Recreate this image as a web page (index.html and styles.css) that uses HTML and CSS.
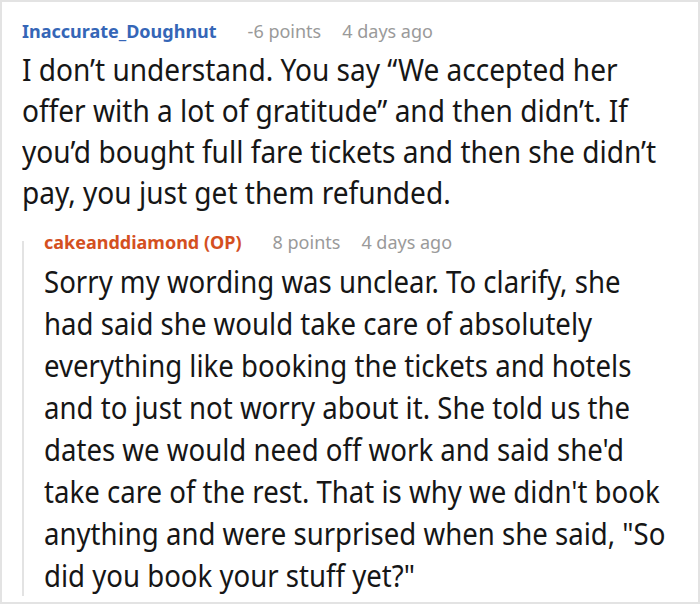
FILE: index.html
```html
<!DOCTYPE html>
<html>
<head>
<meta charset="utf-8">
<link rel="stylesheet" href="styles.css">
</head>
<body>
<div class="frame">
  <div class="comment">
    <div class="meta">
      <span class="user user-blue">Inaccurate_Doughnut</span>
      <span class="info">-6 points</span>
      <span class="info">4 days ago</span>
    </div>
    <p class="body body-top">I don’t understand. You say “We accepted her<br>offer with a lot of gratitude” and then didn’t. If<br>you’d bought full fare tickets and then she didn’t<br>pay, you just get them refunded.</p>
    <div class="reply">
      <div class="meta">
        <span class="user user-orange">cakeanddiamond (OP)</span>
        <span class="info">8 points</span>
        <span class="info">4 days ago</span>
      </div>
      <p class="body body-reply">Sorry my wording was unclear. To clarify, she<br>had said she would take care of absolutely<br>everything like booking the tickets and hotels<br>and to just not worry about it. She told us the<br>dates we would need off work and said she'd<br>take care of the rest. That is why we didn't book<br>anything and were surprised when she said, "So<br>did you book your stuff yet?"</p>
    </div>
  </div>
</div>
</body>
</html>
```

FILE: styles.css
```css
html, body {
  margin: 0;
  padding: 0;
  background: #ffffff;
}
.frame {
  width: 700px;
  height: 604px;
  box-sizing: border-box;
  border: 2px solid #e3e3e3;
  padding: 17px 25px 0 20px;
  font-family: "Noto Sans", "Open Sans", sans-serif;
  color: #161616;
  overflow: hidden;
}
.meta {
  display: flex;
  font-size: 18px;
  line-height: 24px;
  height: 24px;
}
.user {
  font-weight: 700;
  margin-right: 31px;
}
.user-blue { color: #3566b7; }
.user-orange { color: #d4501f; }
.info {
  color: #9a9a9a;
  margin-right: 21px;
}
.body {
  margin: 6px 0 0 0;
  font-size: 31px;
  line-height: 41px;
  white-space: nowrap;
  transform-origin: 0 0;
}
.body-top {
  transform: scaleX(0.905);
}
.reply {
  position: relative;
  margin-top: 17px;
  padding-left: 22px;
}
.reply::before {
  content: "";
  position: absolute;
  left: 0;
  top: 11px;
  bottom: 0;
  width: 2px;
  background: #e3e3e3;
}
.body-reply {
  line-height: 42px;
  transform: scaleX(0.89);
}
```
